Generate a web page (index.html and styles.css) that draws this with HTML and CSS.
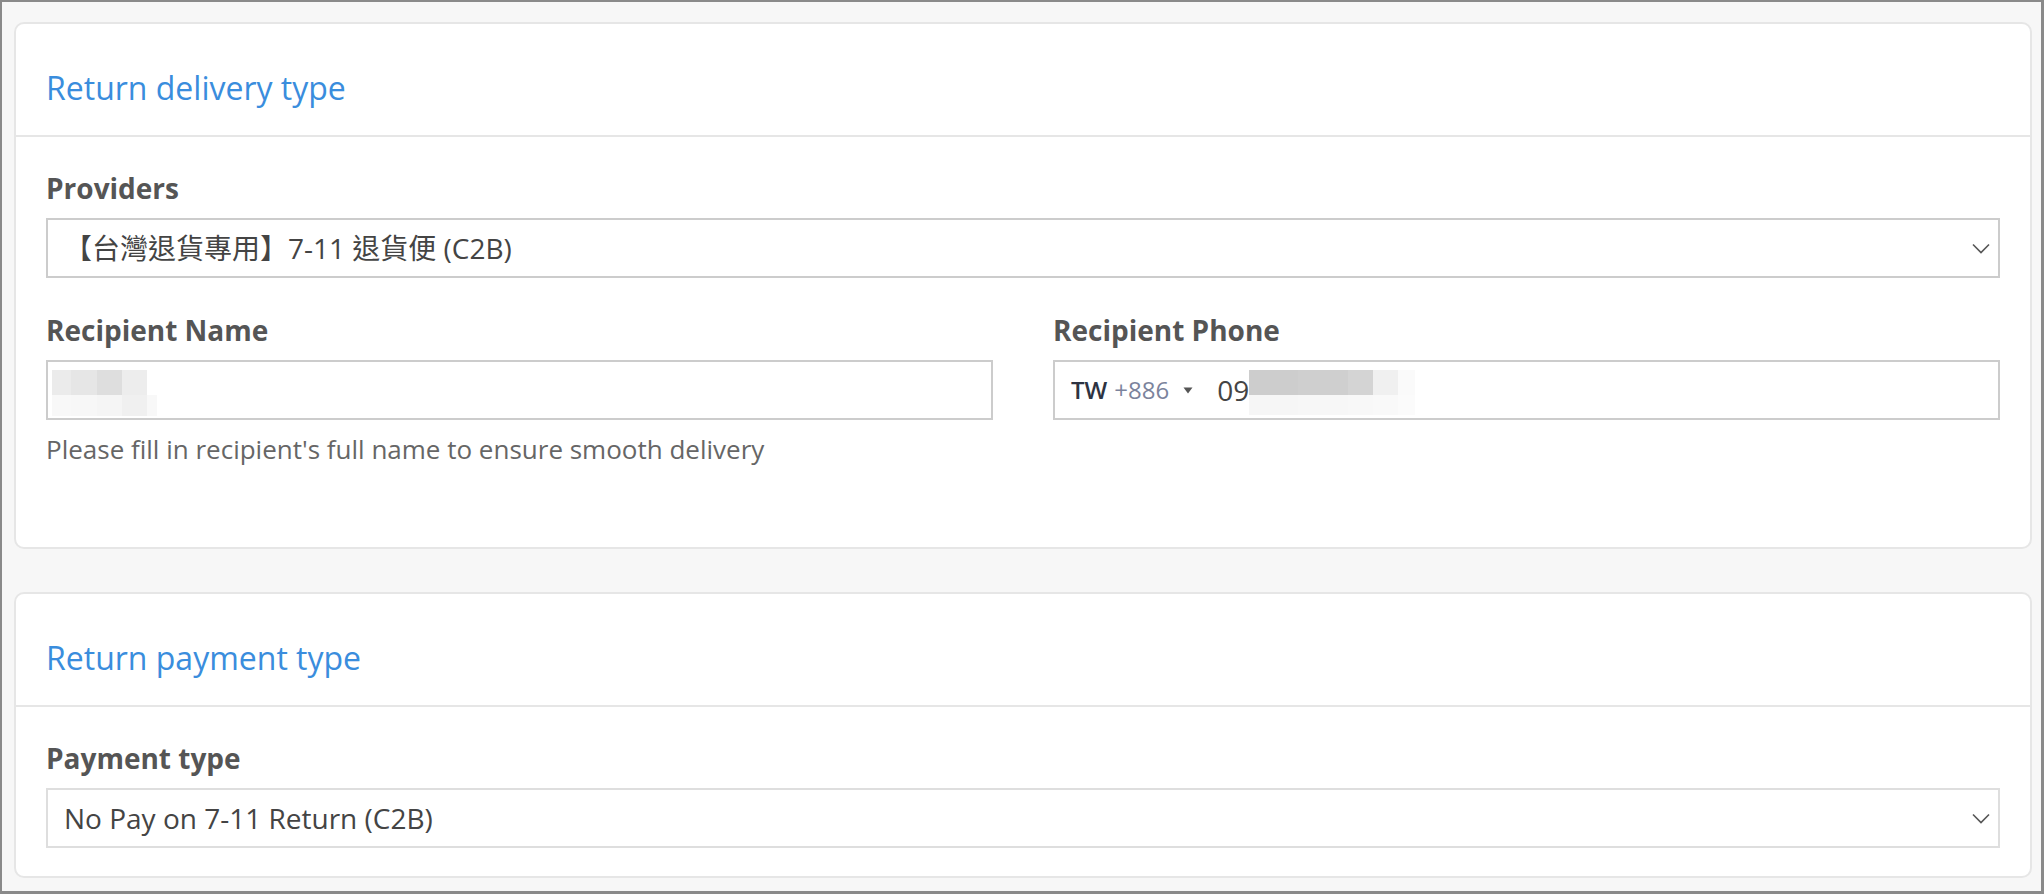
FILE: index.html
```html
<!DOCTYPE html>
<html lang="en">
<head>
<meta charset="utf-8">
<title>Return settings</title>
<link rel="stylesheet" href="styles.css">
</head>
<body>
<div class="frame">
  <section class="card">
    <header class="card-header">
      <h2 class="card-title">Return delivery type</h2>
    </header>
    <div class="card-body card-body--delivery">
      <div class="form-group">
        <label class="label">Providers</label>
        <div class="select">
          <span class="select-value">【台灣退貨專用】7-11 退貨便 (C2B)</span>
          <svg class="chevron" width="18" height="11" viewBox="0 0 18 11"><polyline points="1,1.5 9,9.5 17,1.5" fill="none" stroke="#555" stroke-width="1.6"/></svg>
        </div>
      </div>
      <div class="row">
        <div class="col">
          <label class="label">Recipient Name</label>
          <div class="input input--name">
            <div class="mosaic mosaic--name">
              <i class="c n1"></i><i class="c n2"></i><i class="c n3"></i><i class="c n4"></i><i class="c n5"></i>
              <i class="c n6"></i><i class="c n7"></i><i class="c n8"></i><i class="c n9"></i><i class="c n10"></i>
            </div>
          </div>
          <p class="help">Please fill in recipient's full name to ensure smooth delivery</p>
        </div>
        <div class="col">
          <label class="label">Recipient Phone</label>
          <div class="input input--phone">
            <span class="country">TW</span>
            <span class="dial">+886</span>
            <svg class="caret" width="10" height="7" viewBox="0 0 10 7"><polygon points="0.5,0.5 9.5,0.5 5,6.5" fill="#555"/></svg>
            <span class="phone-num">09</span>
            <div class="mosaic mosaic--phone">
              <i class="c p1"></i><i class="c p2"></i><i class="c p3"></i><i class="c p4"></i><i class="c p5"></i>
              <i class="c p6"></i><i class="c p7"></i><i class="c p8"></i><i class="c p9"></i><i class="c p10"></i>
            </div>
          </div>
        </div>
      </div>
    </div>
  </section>

  <section class="card card--payment">
    <header class="card-header">
      <h2 class="card-title">Return payment type</h2>
    </header>
    <div class="card-body card-body--payment">
      <div class="form-group form-group--last">
        <label class="label">Payment type</label>
        <div class="select select--light">
          <span class="select-value">No Pay on 7-11 Return (C2B)</span>
          <svg class="chevron" width="18" height="11" viewBox="0 0 18 11"><polyline points="1,1.5 9,9.5 17,1.5" fill="none" stroke="#555" stroke-width="1.6"/></svg>
        </div>
      </div>
    </div>
  </section>
</div>
</body>
</html>
```

FILE: styles.css
```css
* { box-sizing: border-box; }

html, body {
  margin: 0;
  padding: 0;
}

body {
  font-family: "Open Sans", "Noto Sans CJK TC", sans-serif;
  color: #444;
  background: #f7f7f7;
}

.frame {
  height: 894px;
  overflow: hidden;
  background: #f7f7f7;
  border: 2px solid #8a8a8a;
  border-right-width: 3px;
  border-bottom-width: 3px;
  padding: 20px 9px 0 12px;
}

.card {
  background: #fff;
  border: 2px solid #e6e6e6;
  border-radius: 10px;
}

.card--payment {
  margin-top: 43px;
}

.card-header {
  padding: 44px 30px 27px;
  border-bottom: 2px solid #e6e6e6;
}

.card-title {
  margin: 0;
  font-size: 32px;
  line-height: 40px;
  font-weight: 400;
  color: #3a8ddd;
}

.card-body {
  padding: 31px 30px 80px;
}

.card-body--payment {
  padding-bottom: 28px;
}

.form-group {
  margin-bottom: 32px;
}

.form-group--last {
  margin-bottom: 0;
}

.label {
  display: block;
  font-size: 28px;
  line-height: 40px;
  font-weight: 700;
  color: #555;
  margin-bottom: 10px;
}

.select {
  display: flex;
  align-items: center;
  justify-content: space-between;
  height: 60px;
  border: 2px solid #ccc;
  padding: 0 8px 0 16px;
  background: #fff;
}

.select--light {
  border-color: #dedede;
}

.select-value {
  font-size: 28px;
  line-height: 36px;
  color: #444;
  white-space: nowrap;
}

.chevron {
  display: block;
  flex: none;
}

.row {
  display: grid;
  grid-template-columns: 1fr 1fr;
  column-gap: 60px;
}

.input {
  display: flex;
  align-items: center;
  height: 60px;
  border: 2px solid #ccc;
  background: #fff;
}

.input--name {
  padding-left: 4px;
  align-items: flex-start;
}

.input--phone {
  padding-left: 16px;
}

.country {
  font-size: 24px;
  line-height: 32px;
  font-weight: 600;
  color: #2d3342;
}

.dial {
  font-size: 24px;
  line-height: 32px;
  color: #7b839c;
  margin-left: 7px;
}

.caret {
  display: block;
  margin-left: 14px;
  margin-top: 1px;
}

.phone-num {
  font-size: 28px;
  line-height: 36px;
  color: #444;
  margin-left: 24px;
}

.mosaic {
  display: grid;
  align-self: flex-start;
  margin-top: 8px;
}

.mosaic--name {
  grid-template-columns: 19px 26px 25px 25px 10px;
  grid-template-rows: 25px 21px;
}

.mosaic--phone {
  grid-template-columns: 49px 50px 25px 25px 17px;
  grid-template-rows: 25px 20px;
}

.c { display: block; }

.n1 { background: #ebebeb; }
.n2 { background: #e6e6e6; }
.n3 { background: #dedede; }
.n4 { background: #ededed; }
.n5 { background: #ffffff; }
.n6 { background: #f8f8f8; }
.n7 { background: #f7f7f7; }
.n8 { background: #f5f5f5; }
.n9 { background: #f0f0f0; }
.n10 { background: #f8f8f8; }

.p1 { background: #cdcdcd; }
.p2 { background: #cfcfcf; }
.p3 { background: #d4d4d4; }
.p4 { background: #f0f0f0; }
.p5 { background: #fafafa; }
.p6 { background: #f6f6f6; }
.p7 { background: #f7f7f7; }
.p8 { background: #f8f8f8; }
.p9 { background: #f9f9f9; }
.p10 { background: #fbfbfb; }

.help {
  margin: 11px 0 0;
  font-size: 26px;
  line-height: 36px;
  color: #666;
}
```
